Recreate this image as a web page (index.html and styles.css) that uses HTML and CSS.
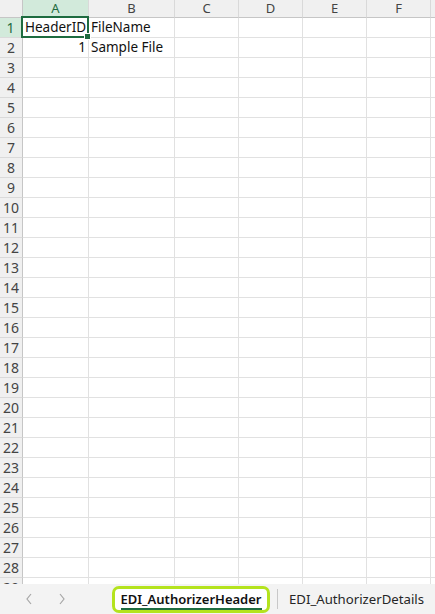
FILE: index.html
```html
<!DOCTYPE html>
<html>
<head>
<meta charset="utf-8">
<link rel="stylesheet" href="styles.css">
</head>
<body>
<div class="sheet">
  <div class="grid">
    <div class="corner"></div>
    <div class="ch sel">A</div><div class="ch">B</div><div class="ch">C</div><div class="ch">D</div><div class="ch">E</div><div class="ch">F</div><div class="ch"></div>

    <div class="rh sel">1</div><div class="c">HeaderID</div><div class="c">FileName</div><div class="c"></div><div class="c"></div><div class="c"></div><div class="c"></div><div class="c"></div>
    <div class="rh">2</div><div class="c num">1</div><div class="c">Sample File</div><div class="c"></div><div class="c"></div><div class="c"></div><div class="c"></div><div class="c"></div>
    <div class="rh">3</div><div class="c"></div><div class="c"></div><div class="c"></div><div class="c"></div><div class="c"></div><div class="c"></div><div class="c"></div>
    <div class="rh">4</div><div class="c"></div><div class="c"></div><div class="c"></div><div class="c"></div><div class="c"></div><div class="c"></div><div class="c"></div>
    <div class="rh">5</div><div class="c"></div><div class="c"></div><div class="c"></div><div class="c"></div><div class="c"></div><div class="c"></div><div class="c"></div>
    <div class="rh">6</div><div class="c"></div><div class="c"></div><div class="c"></div><div class="c"></div><div class="c"></div><div class="c"></div><div class="c"></div>
    <div class="rh">7</div><div class="c"></div><div class="c"></div><div class="c"></div><div class="c"></div><div class="c"></div><div class="c"></div><div class="c"></div>
    <div class="rh">8</div><div class="c"></div><div class="c"></div><div class="c"></div><div class="c"></div><div class="c"></div><div class="c"></div><div class="c"></div>
    <div class="rh">9</div><div class="c"></div><div class="c"></div><div class="c"></div><div class="c"></div><div class="c"></div><div class="c"></div><div class="c"></div>
    <div class="rh">10</div><div class="c"></div><div class="c"></div><div class="c"></div><div class="c"></div><div class="c"></div><div class="c"></div><div class="c"></div>
    <div class="rh">11</div><div class="c"></div><div class="c"></div><div class="c"></div><div class="c"></div><div class="c"></div><div class="c"></div><div class="c"></div>
    <div class="rh">12</div><div class="c"></div><div class="c"></div><div class="c"></div><div class="c"></div><div class="c"></div><div class="c"></div><div class="c"></div>
    <div class="rh">13</div><div class="c"></div><div class="c"></div><div class="c"></div><div class="c"></div><div class="c"></div><div class="c"></div><div class="c"></div>
    <div class="rh">14</div><div class="c"></div><div class="c"></div><div class="c"></div><div class="c"></div><div class="c"></div><div class="c"></div><div class="c"></div>
    <div class="rh">15</div><div class="c"></div><div class="c"></div><div class="c"></div><div class="c"></div><div class="c"></div><div class="c"></div><div class="c"></div>
    <div class="rh">16</div><div class="c"></div><div class="c"></div><div class="c"></div><div class="c"></div><div class="c"></div><div class="c"></div><div class="c"></div>
    <div class="rh">17</div><div class="c"></div><div class="c"></div><div class="c"></div><div class="c"></div><div class="c"></div><div class="c"></div><div class="c"></div>
    <div class="rh">18</div><div class="c"></div><div class="c"></div><div class="c"></div><div class="c"></div><div class="c"></div><div class="c"></div><div class="c"></div>
    <div class="rh">19</div><div class="c"></div><div class="c"></div><div class="c"></div><div class="c"></div><div class="c"></div><div class="c"></div><div class="c"></div>
    <div class="rh">20</div><div class="c"></div><div class="c"></div><div class="c"></div><div class="c"></div><div class="c"></div><div class="c"></div><div class="c"></div>
    <div class="rh">21</div><div class="c"></div><div class="c"></div><div class="c"></div><div class="c"></div><div class="c"></div><div class="c"></div><div class="c"></div>
    <div class="rh">22</div><div class="c"></div><div class="c"></div><div class="c"></div><div class="c"></div><div class="c"></div><div class="c"></div><div class="c"></div>
    <div class="rh">23</div><div class="c"></div><div class="c"></div><div class="c"></div><div class="c"></div><div class="c"></div><div class="c"></div><div class="c"></div>
    <div class="rh">24</div><div class="c"></div><div class="c"></div><div class="c"></div><div class="c"></div><div class="c"></div><div class="c"></div><div class="c"></div>
    <div class="rh">25</div><div class="c"></div><div class="c"></div><div class="c"></div><div class="c"></div><div class="c"></div><div class="c"></div><div class="c"></div>
    <div class="rh">26</div><div class="c"></div><div class="c"></div><div class="c"></div><div class="c"></div><div class="c"></div><div class="c"></div><div class="c"></div>
    <div class="rh">27</div><div class="c"></div><div class="c"></div><div class="c"></div><div class="c"></div><div class="c"></div><div class="c"></div><div class="c"></div>
    <div class="rh">28</div><div class="c"></div><div class="c"></div><div class="c"></div><div class="c"></div><div class="c"></div><div class="c"></div><div class="c"></div>
    <div class="rh">29</div><div class="c"></div><div class="c"></div><div class="c"></div><div class="c"></div><div class="c"></div><div class="c"></div><div class="c"></div>
  </div>
  <div class="selection"><span class="handle"></span></div>
</div>
<div class="tabbar">
  <div class="nav">
    <svg class="arrow" width="10" height="14" viewBox="0 0 10 14"><path d="M7 2 L3 7 L7 12" fill="none" stroke="#a6a6a6" stroke-width="1.2"/></svg>
    <svg class="arrow" width="10" height="14" viewBox="0 0 10 14"><path d="M3 2 L7 7 L3 12" fill="none" stroke="#a6a6a6" stroke-width="1.2"/></svg>
  </div>
  <div class="tab active"><span class="label">EDI_AuthorizerHeader</span></div>
  <div class="sep"></div>
  <div class="tab"><span class="label">EDI_AuthorizerDetails</span></div>
</div>
</body>
</html>
```
FILE: styles.css
```css
html, body {
  margin: 0;
  padding: 0;
  background: #ffffff;
  overflow: hidden;
}
body {
  width: 435px;
  height: 614px;
  font-family: "Noto Sans", "Open Sans", sans-serif;
  color: #000;
}
.sheet {
  position: relative;
  height: 584px;
  overflow: hidden;
}
.grid {
  display: grid;
  grid-template-columns: 23px 66px 86px 64px 64px 64px 64px 64px;
  grid-template-rows: 18px;
  grid-auto-rows: 20px;
}
.corner {
  background: #f0f0f0;
  border-right: 1px solid #c6c6c6;
  border-bottom: 1px solid #c6c6c6;
  box-sizing: border-box;
}
.ch {
  box-sizing: border-box;
  background: #f0f0f0;
  border-right: 1px solid #d9d9d9;
  border-bottom: 1px solid #c6c6c6;
  font-size: 13px;
  color: #444;
  display: flex;
  align-items: center;
  justify-content: center;
  line-height: 17px;
}
.ch.sel {
  background: #d2eadb;
  color: #1e6c40;
  border-bottom-color: #1e6c40;
  box-shadow: inset 0 -1px 0 #1e6c40;
}
.rh {
  box-sizing: border-box;
  background: #f0f0f0;
  border-right: 1px solid #c6c6c6;
  border-bottom: 1px solid #dadada;
  font-size: 14px;
  color: #444;
  display: flex;
  align-items: center;
  justify-content: center;
  line-height: 1;
}
.rh.sel {
  background: #d2eadb;
  color: #1e6c40;
  border-right: 2px solid #1e6c40;
}
.c {
  box-sizing: border-box;
  border-right: 1px solid #e1e1e1;
  border-bottom: 1px solid #e1e1e1;
  font-size: 13.5px;
  color: #111;
  padding: 0 2px;
  display: flex;
  align-items: center;
  white-space: nowrap;
  line-height: 1;
}
.c.num {
  justify-content: flex-end;
}
.selection {
  position: absolute;
  left: 21px;
  top: 16px;
  width: 68px;
  height: 22px;
  box-sizing: border-box;
  border: 2px solid #1e6c40;
}
.handle {
  position: absolute;
  right: -4px;
  bottom: -4px;
  width: 5px;
  height: 5px;
  background: #1e6c40;
  border: 1px solid #fff;
}
.tabbar {
  height: 30px;
  background: #f3f3f3;
  display: flex;
  align-items: center;
  font-family: "Noto Sans", "Open Sans", sans-serif;
  white-space: nowrap;
}
.tabbar > * {
  flex-shrink: 0;
}
.nav {
  display: flex;
  gap: 23px;
  padding-left: 24px;
  width: 88px;
  box-sizing: border-box;
}
.arrow {
  display: block;
}
.tab {
  height: 27px;
  display: flex;
  align-items: center;
  font-size: 13.2px;
  color: #262626;
  padding: 0 0 0 11px;
}
.tab.active {
  margin-left: 24px;
  width: 158px;
  justify-content: center;
  background: #ffffff;
  border: 3px solid #b4e31e;
  border-radius: 7px;
  box-sizing: border-box;
  font-size: 13px;
  font-weight: 600;
  color: #111;
  padding: 0;
}
.tab.active .label {
  border-bottom: 2px solid #1e6c40;
  line-height: 17px;
  margin-top: 2px;
}
.sep {
  width: 1px;
  height: 20px;
  background: #c8c8c8;
  margin-left: 7px;
}
```
